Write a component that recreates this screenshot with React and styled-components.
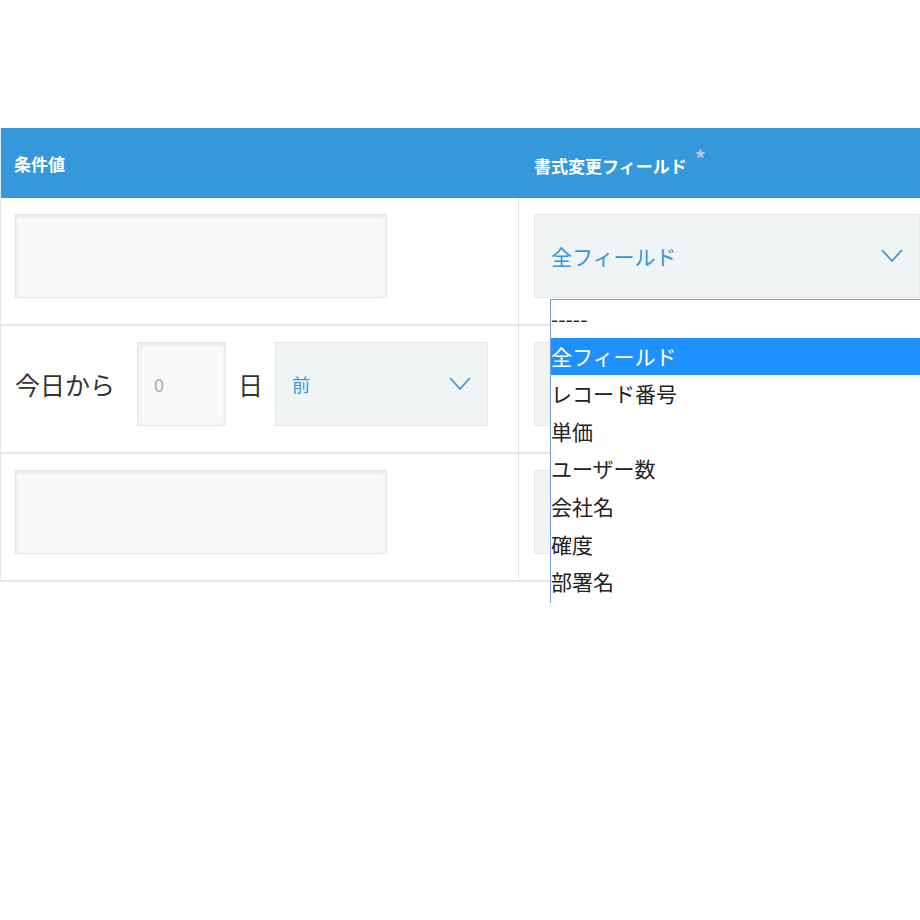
import React from "react";
import styled, { createGlobalStyle } from "styled-components";

const G = createGlobalStyle`
  body{margin:0;background:#fff;font-family:"Noto Sans CJK JP","Noto Sans",sans-serif;overflow:hidden;}
`;
const Page = styled.div`width:920px;height:920px;padding-top:128px;box-sizing:border-box;overflow:hidden;`;
const Table = styled.div`width:1040px;border-left:1px solid #e3e7e8;`;
const Head = styled.div`display:grid;grid-template-columns:518px 1fr;height:70px;background:#3498db;align-items:center;color:#fff;font-size:17px;font-weight:bold;`;
const HCell = styled.div`padding-left:${p=>p.$pl}px;`;
const Star = styled.span`color:#b8c6d0;font-size:22px;margin-left:8px;position:relative;top:-6px;`;
const Row = styled.div`display:grid;grid-template-columns:518px 1fr;height:128px;border-bottom:2px solid #e3e7e8;box-sizing:border-box;`;
const Cell = styled.div`display:flex;align-items:flex-start;padding:16px 0 0 ${p=>p.$pl}px;border-right:${p=>p.$br?"1px solid #e3e7e8":"none"};position:relative;`;
const Input = styled.div`width:${p=>p.$w}px;height:84px;flex:none;background:#f7f9fa;border:1px solid #e3e7e8;box-sizing:border-box;box-shadow:inset 0 2px 5px rgba(0,0,0,.08);color:#aaa;font-size:18px;display:flex;align-items:center;padding-left:16px;`;
const Select = styled.div`width:${p=>p.$w}px;height:84px;flex:none;background:#f1f4f5;border:1px solid #e3e7e8;box-sizing:border-box;display:flex;align-items:center;justify-content:space-between;padding:0 ${p=>p.$pr}px 0 16px;color:#3498db;font-size:${p=>p.$fs}px;`;
const Label = styled.span`font-size:25px;color:#333;line-height:84px;margin:0 ${p=>p.$mr}px 0 ${p=>p.$ml}px;`;
const List = styled.div`position:absolute;left:31px;top:101px;width:480px;background:#fff;border:1px solid #7a9cd8;border-bottom:none;z-index:2;height:303px;overflow:hidden;`;
const Item = styled.div`height:37.6px;line-height:37.6px;font-size:21px;background:${p=>p.$sel?"#1e90ff":"transparent"};color:${p=>p.$sel?"#fff":"#222"};`;
const Chev = () => (<svg width="22" height="14" viewBox="0 0 22 14"><path d="M1 1l10 11L21 1" fill="none" stroke="#3498db" strokeWidth="1.8"/></svg>);

export default function App(){
  const items=["-----","全フィールド","レコード番号","単価","ユーザー数","会社名","確度","部署名"];
  return (<Page><G/><Table>
    <Head><HCell $pl={13}>条件値</HCell><HCell $pl={15}>書式変更フィールド<Star>*</Star></HCell></Head>
    <Row><Cell $pl={14} $br><Input $w={372}/></Cell>
      <Cell $pl={15}><Select $w={386} $pr={16} $fs={21}>全フィールド<Chev/></Select>
        <List>{items.map((t,i)=><Item key={i} $sel={i===1}>{t}</Item>)}</List></Cell></Row>
    <Row><Cell $pl={14} $br><Label $ml={0} $mr={22}>今日から</Label><Input $w={89}>0</Input><Label $ml={12} $mr={12}>日</Label><Select $w={213} $pr={16} $fs={18}>前<Chev/></Select></Cell>
      <Cell $pl={15}><Select $w={386} $pr={16} $fs={21}/></Cell></Row>
    <Row><Cell $pl={14} $br><Input $w={372}/></Cell><Cell $pl={15}><Select $w={386} $pr={16} $fs={21}/></Cell></Row>
  </Table></Page>);
}
